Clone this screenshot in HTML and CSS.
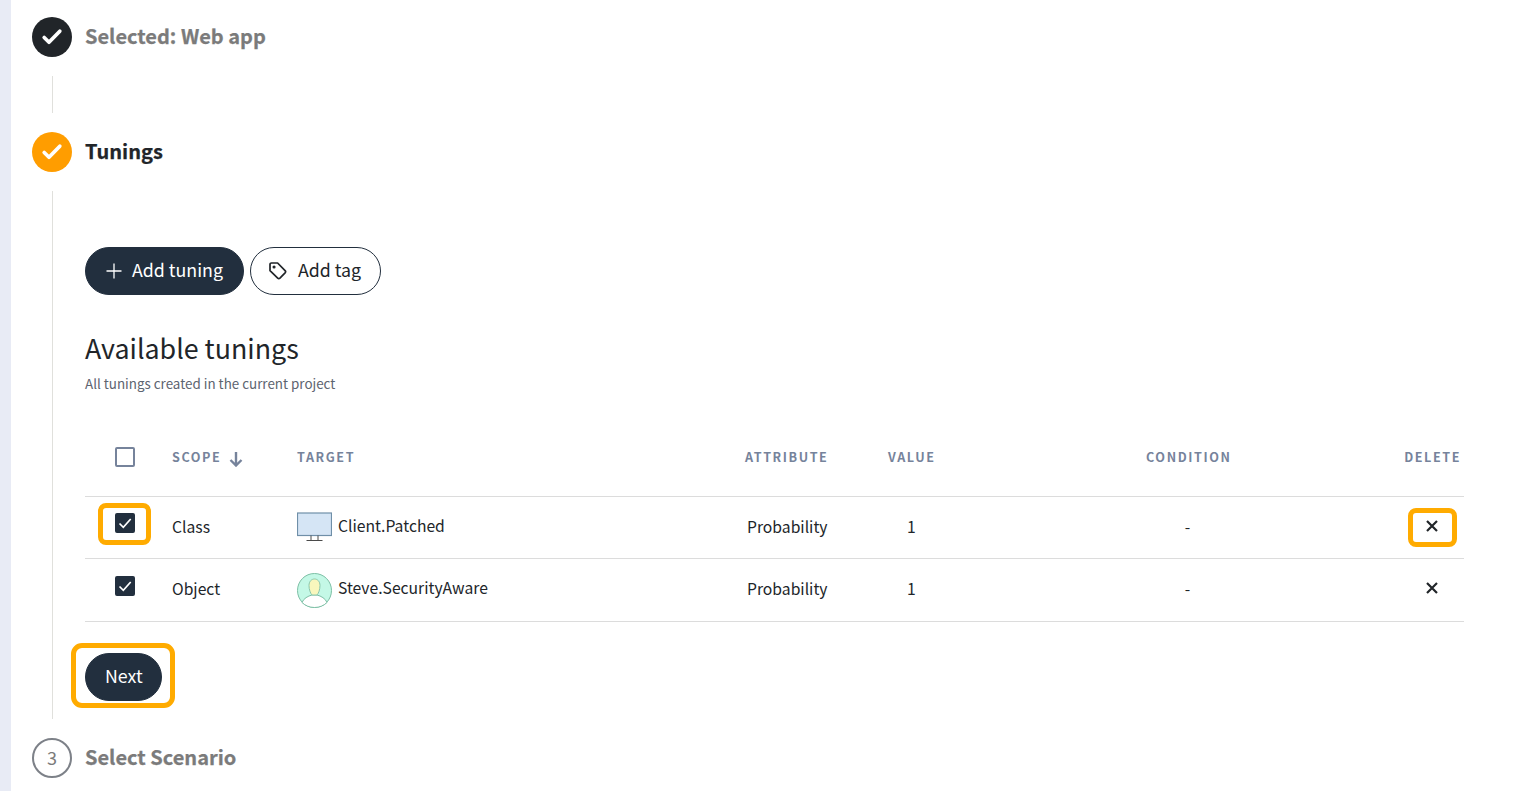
FILE: index.html
```html
<!DOCTYPE html>
<html lang="en">
<head>
<meta charset="utf-8">
<title>Tunings</title>
<link rel="stylesheet" href="styles.css">
</head>
<body>
<div class="page">
  <aside class="rail"></aside>
  <main class="stepper">
    <section class="step step-first">
      <header class="step-head">
        <span class="dot dot-dark"><svg class="dot-check" viewBox="0 0 22 22"><path d="M3.2 11.500L8 16.300L18.800 5.200" /></svg></span>
        <h3 class="step-title step-title-muted">Selected: Web app</h3>
      </header>
      <div class="step-body step-body-short"></div>
    </section>

    <section class="step">
      <header class="step-head">
        <span class="dot dot-orange"><svg class="dot-check" viewBox="0 0 22 22"><path d="M3.2 11.500L8 16.300L18.800 5.200" /></svg></span>
        <h3 class="step-title">Tunings</h3>
      </header>
      <div class="step-body step-body-main">
        <div class="actions">
          <button class="btn btn-dark">
            <svg class="btn-icon" viewBox="0 0 16 16"><path d="M8 0.5v15M0.5 8h15" /></svg>
            <span class="btn-label">Add tuning</span>
          </button>
          <button class="btn btn-outline">
            <svg class="btn-icon btn-icon-tag" viewBox="1.200 1.200 17.800 17.800"><path d="M2.200 3.600a1.400 1.400 0 0 1 1.400-1.400h6.100l7.400 7.600a1.600 1.600 0 0 1 0 2.200l-5.100 5.100a1.600 1.600 0 0 1-2.200 0L2.200 9.800z" /><circle cx="6.200" cy="6.200" r="0.700" /></svg>
            <span class="btn-label">Add tag</span>
          </button>
        </div>

        <h2 class="heading">Available tunings</h2>
        <p class="subheading">All tunings created in the current project</p>

        <table class="tunings">
          <thead>
            <tr>
              <th class="col-check"><span class="box"></span></th>
              <th class="col-scope">Scope <svg class="sort" viewBox="0 0 14 16"><path d="M7 1v13.500M1.500 9L7 14.500L12.500 9" /></svg></th>
              <th class="col-target">Target</th>
              <th class="col-attr">Attribute</th>
              <th class="col-value">Value</th>
              <th class="col-cond">Condition</th>
              <th class="col-del">Delete</th>
            </tr>
          </thead>
          <tbody>
            <tr>
              <td class="col-check">
                <span class="mark mark-check"></span>
                <span class="box box-on"><svg viewBox="0 0 20 20"><path d="M4.500 10.500l3.800 3.800 7.400-8.300" /></svg></span>
              </td>
              <td class="col-scope">Class</td>
              <td class="col-target">
                <span class="target">
                  <svg class="asset" viewBox="0 0 35 35">
                    <rect class="screen" x="0.500" y="3" width="34" height="22.500" />
                    <path class="stand" d="M14 25.500v5M21 25.500v5M9.500 30.500h16" />
                  </svg>
                  <span class="target-name">Client.Patched</span>
                </span>
              </td>
              <td class="col-attr">Probability</td>
              <td class="col-value">1</td>
              <td class="col-cond">-</td>
              <td class="col-del">
                <span class="mark mark-del"></span>
                <svg class="del" viewBox="0 0 12 12"><path d="M1 1l10 10M11 1L1 11" /></svg>
              </td>
            </tr>
            <tr>
              <td class="col-check">
                <span class="box box-on"><svg viewBox="0 0 20 20"><path d="M4.500 10.500l3.800 3.800 7.400-8.300" /></svg></span>
              </td>
              <td class="col-scope">Object</td>
              <td class="col-target">
                <span class="target">
                  <svg class="asset asset-avatar" viewBox="0 0 35 35">
                    <circle class="avatar" cx="17.500" cy="17.500" r="17" />
                    <path class="shoulders" d="M5 29.500c1.500-4 6-6.500 10-7.500h5c4 1 8.500 3.500 10 7.500c-3 3-7.500 5-12.500 5s-9.500-2-12.500-5z" />
                    <path class="face" d="M12 12.500c0-4 2.500-6.500 5.500-6.500s5.500 2.500 5.500 6.500c0 4-1.500 8-3 9.500h-5c-1.500-1.500-3-5.500-3-9.500z" />
                  </svg>
                  <span class="target-name">Steve.SecurityAware</span>
                </span>
              </td>
              <td class="col-attr">Probability</td>
              <td class="col-value">1</td>
              <td class="col-cond">-</td>
              <td class="col-del">
                <svg class="del" viewBox="0 0 12 12"><path d="M1 1l10 10M11 1L1 11" /></svg>
              </td>
            </tr>
          </tbody>
        </table>

        <div class="footer">
          <button class="btn btn-dark btn-next"><span class="mark mark-next"></span><span class="btn-label">Next</span></button>
        </div>
      </div>
    </section>

    <section class="step">
      <header class="step-head">
        <span class="dot dot-open">3</span>
        <h3 class="step-title step-title-muted">Select Scenario</h3>
      </header>
    </section>
  </main>
</div>
</body>
</html>
```

FILE: styles.css
```css
* { box-sizing: border-box; }
html, body { margin: 0; height: 100%; overflow: hidden; background: #fff; }
body {
  font-family: "Noto Sans CJK JP", "Noto Sans", sans-serif;
  color: #212529;
  font-size: 16px;
}
.page { display: flex; height: 791px; }
.rail { width: 11px; flex: none; background: #e8ebf5; }
.stepper { flex: 1; padding: 17px 65px 0 21px; }

.step-head { display: flex; align-items: center; gap: 13px; height: 40px; }
.dot {
  width: 40px; height: 40px; border-radius: 50%; flex: none;
  display: flex; align-items: center; justify-content: center;
}
.dot-dark { background: #212529; }
.dot-orange { background: #ff9d00; }
.dot-open { border: 2px solid #7d8188; color: #7b7b7b; font-size: 18px; line-height: 1; padding-bottom: 3px; }
.dot-check { width: 22px; height: 22px; fill: none; stroke: #fff; stroke-width: 3.700; stroke-linecap: round; stroke-linejoin: round; }
.step-title { margin: 0 0 2px; font-size: 20px; line-height: 30px; font-weight: 700; color: #212529; -webkit-text-stroke: 0.25px currentColor; }
.step-title-muted { color: #7b7b7b; }

.step-body { margin: 19px 0 19px 20px; border-left: 1px solid #e0e0dc; padding-left: 32px; }
.step-body-short { height: 37px; }
.step-body-main { height: 528px; padding-top: 56px; }

.actions { display: flex; gap: 6px; }
.btn {
  font: inherit; font-size: 17.800px; line-height: 26px;
  height: 48px; border-radius: 24px; padding: 0 20px;
  display: inline-flex; align-items: center; gap: 10px; cursor: pointer;
}
.btn-label { position: relative; top: -2px; }
.btn-dark { background: #222f3e; color: #fff; border: 1px solid #222f3e; }
.btn-next { padding: 0 18px 0 19px; position: relative; }
.btn-outline { background: #fff; color: #212529; border: 1px solid #222f3e; padding: 0 19px 0 18px; gap: 11px; }
.btn-icon { width: 16px; height: 16px; fill: none; stroke: #fff; stroke-width: 1.300; }
.btn-icon-tag { width: 18px; height: 18px; stroke: #212529; stroke-width: 1.700; stroke-linejoin: round; }

.heading { margin: 35px 0 0; font-size: 26.800px; line-height: 36px; font-weight: 400; color: #212529; }
.subheading { margin: 7px 0 0; font-size: 13.400px; line-height: 20px; color: #5d6470; }

.tunings { width: 1379px; margin-top: 37px; border-collapse: collapse; table-layout: fixed; }
.tunings th {
  height: 66px; padding: 0 0 12px; text-align: left; vertical-align: middle;
  font-size: 12.600px; line-height: 20px; font-weight: 700; letter-spacing: 1.580px;
  text-transform: uppercase; color: #76839b;
  border-bottom: 1px solid #dcdcdc;
}
.tunings td {
  height: 62px; padding: 0; font-size: 15.700px; line-height: 24px; color: #212529;
  border-bottom: 1px solid #dcdcdc; vertical-align: middle;
}
.tunings tbody tr:last-child td { height: 63px; padding-bottom: 1px; }

.tunings th.col-check, .tunings td.col-check { width: 87px; padding-left: 30px; position: relative; }
.tunings .col-scope { width: 125px; }
.tunings .col-target { width: 448px; }
.tunings .col-attr { width: 143px; }
.tunings .col-value { width: 198px; }
.tunings .col-cond { width: 246px; }
.tunings .col-del { position: relative; }
.tunings th.col-del { text-align: right; padding-right: 3px; }
.tunings th.col-cond { padding-left: 60px; }
.tunings td.col-cond { text-align: center; padding-right: 43px; }
.tunings td.col-attr { padding-left: 2px; }
.tunings td.col-value { padding-left: 19px; }
.tunings td.col-del { padding-left: 95px; }

.box {
  display: flex; align-items: center; justify-content: center;
  width: 20px; height: 20px; border: 2px solid #76839b; border-radius: 2px; background: #fff;
}
.box-on { background: #222f3e; border-color: #222f3e; position: relative; top: -4px; }
.tunings tbody tr:last-child .box-on { top: -3px; }
.box-on svg { width: 20px; height: 20px; flex: none; fill: none; stroke: #fff; stroke-width: 1.700; }

.sort { width: 14px; height: 16px; margin-left: 3px; vertical-align: -5px; fill: none; stroke: #76839b; stroke-width: 2.400; }

.target { display: flex; align-items: flex-start; gap: 6px; }
.target-name { line-height: 24px; padding-top: 5px; }
.asset { width: 35px; height: 35px; flex: none; margin-top: 1px; }
.asset-avatar { margin-top: 2px; }
.screen { fill: #d5e5f5; stroke: #6f8fa8; stroke-width: 1.200; }
.stand { fill: none; stroke: #4a4a4a; stroke-width: 1; }
.avatar { fill: #c4f8e6; stroke: #7dbfa5; stroke-width: 1; }
.face { fill: #f9f7bd; stroke: #8cc7ad; stroke-width: 1; }
.shoulders { fill: #fff; stroke: #7dbfa5; stroke-width: 1; }

.del { display: block; width: 12px; height: 12px; fill: none; stroke: #212529; stroke-width: 2.200; position: relative; top: -1px; left: -1px; }

.mark { position: absolute; border: 5px solid #ffab00; border-radius: 8px; pointer-events: none; }
.mark-check { left: 13px; top: 6px; width: 53px; height: 42px; }
.mark-del { left: 76px; top: 11px; width: 49px; height: 39px; }
.mark-next { left: -15px; top: -11px; width: 104px; height: 65px; border-radius: 11px; }

.footer { margin-top: 31px; }
```
